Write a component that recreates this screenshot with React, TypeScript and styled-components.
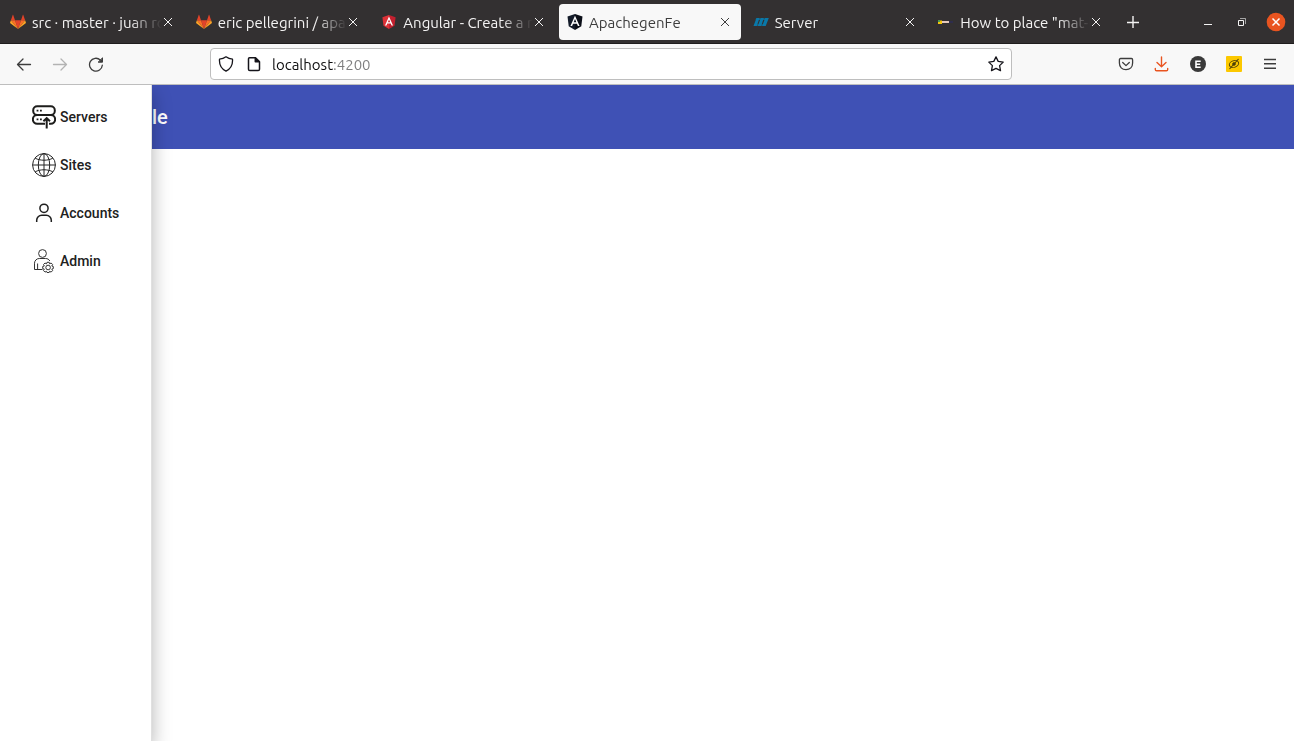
import React from "react";
import styled, { createGlobalStyle } from "styled-components";

const GlobalStyle = createGlobalStyle`
  *, *::before, *::after { box-sizing: border-box; }
  body { margin: 0; background: #fff; }
  button { border: 0; padding: 0; margin: 0; background: none; color: inherit; font: inherit; cursor: pointer; }
  svg { display: block; flex: none; }
`;

const Browser = styled.div`
  display: flex;
  flex-direction: column;
  min-height: 100vh;
  font-family: Ubuntu, "Noto Sans", sans-serif;
  font-size: 15px;
`;

const TitleBar = styled.header`
  display: flex;
  align-items: center;
  height: 44px;
  padding: 0 1px 0 2px;
  background: #333031;
  border-bottom: 1px solid #1f1d1d;
  color: #f4f3f3;
`;

const TabStrip = styled.div`
  display: flex;
  flex: 1;
  min-width: 0;
  gap: 4px;
`;

const TabItem = styled.div<{ $active?: boolean }>`
  display: flex;
  align-items: center;
  flex: 1 1 0;
  min-width: 0;
  height: 36px;
  padding: 0 10px 0 8px;
  border-radius: 4px;
  background: ${(p) => (p.$active ? "#f8f8f8" : "transparent")};
  color: ${(p) => (p.$active ? "#3d3d3d" : "#f4f3f3")};
`;

const TabButton = styled.button`
  display: flex;
  align-items: center;
  flex: 1;
  min-width: 0;
  gap: 6px;
  height: 100%;
  text-align: left;
`;

const TabTitle = styled.span`
  flex: 1;
  min-width: 0;
  overflow: hidden;
  white-space: nowrap;
  line-height: 20px;
  padding-top: 2px;
  mask-image: linear-gradient(to left, transparent, #000 32px);
`;

const TabClose = styled.button`
  display: flex;
  align-items: center;
  justify-content: center;
  width: 12px;
  height: 24px;
`;

const NewTab = styled.button`
  display: flex;
  align-items: center;
  justify-content: center;
  width: 42px;
  height: 36px;
`;

const WindowControls = styled.div`
  display: flex;
  margin-left: 37px;
`;

const WindowButton = styled.button`
  display: flex;
  align-items: center;
  justify-content: center;
  width: 34px;
  height: 36px;
`;

const NavBar = styled.div`
  display: flex;
  align-items: center;
  gap: 96px;
  height: 41px;
  padding: 0 6px;
  background: #f8f8f8;
  border-bottom: 1px solid #bebebe;
  color: #3d3d3d;
`;

const ToolGroup = styled.div`
  display: flex;
`;

const ToolButton = styled.button`
  display: flex;
  align-items: center;
  justify-content: center;
  width: 36px;
  height: 32px;

  &:disabled {
    color: #b3b3b3;
  }
`;

const AddressBar = styled.form`
  display: flex;
  align-items: center;
  flex: 1;
  min-width: 0;
  height: 32px;
  padding: 0 7px;
  background: #fff;
  border: 1px solid #bebebe;
  border-radius: 4px;
  color: #15141a;
`;

const AddressIcon = styled.button`
  display: flex;
  align-items: center;
  justify-content: center;
  width: 16px;
  height: 28px;

  & + & {
    margin-left: 12px;
  }
`;

const AddressInput = styled.input`
  flex: 1;
  min-width: 0;
  height: 28px;
  margin-left: 10px;
  padding: 1px 0 0;
  border: 0;
  outline: 0;
  font: inherit;
  color: transparent;
  caret-color: #15141a;
  background: linear-gradient(to right, #0c0c0d 61px, #7c7c7d 61px);
  background-clip: text;
  -webkit-background-clip: text;
`;

const Page = styled.div`
  display: flex;
  flex: 1;
  overflow: hidden;
  font-family: Roboto, "Liberation Sans", sans-serif;
`;

const Drawer = styled.nav`
  position: relative;
  z-index: 1;
  flex: none;
  width: 152px;
  padding-top: 8px;
  background: #fff;
  border-right: 1px solid #e0e0e0;
  box-shadow: 0 8px 18px rgba(0, 0, 0, 0.3);
`;

const DrawerLink = styled.a`
  display: flex;
  align-items: center;
  gap: 4px;
  height: 48px;
  padding-left: 32px;
  color: #212121;
  font-size: 14px;
  font-weight: 500;
  line-height: 20px;
  text-decoration: none;
`;

const Main = styled.main`
  flex: 1;
  min-width: 0;
`;

const AppToolbar = styled.div`
  display: flex;
  align-items: center;
  height: 64px;
  background: #3f51b5;
  color: #fff;
`;

const AppTitle = styled.h1`
  margin: 0;
  font-size: 20px;
  font-weight: 500;
  line-height: 32px;
`;

const Cross = () => (
  <svg width="10" height="10" viewBox="0 0 10 10" fill="none" stroke="currentColor" strokeWidth="1">
    <path d="M1 1l8 8M9 1L1 9" />
  </svg>
);

const GitlabLogo = () => (
  <svg width="16" height="16" viewBox="0 0 16 16">
    <path fill="#e24329" d="M8 15L5 6.2h6z" />
    <path fill="#fc6d26" d="M8 15L5 6.2H.9zM8 15l3-8.800h4.100z" />
    <path fill="#fca326" d="M.9 6.200L.1 8.600c-.1.3 0 .5.2.7L8 15zM15.100 6.200l.8 2.400c.1.3 0 .5-.2.7L8 15z" />
    <path fill="#e24329" d="M.9 6.200H5L3.200.9c-.1-.3-.4-.3-.5 0zM15.100 6.200H11L12.800.9c.1-.3.4-.3.5 0z" />
  </svg>
);

const AngularLogo = ({ left, right, size }: { left: string; right: string; size: number }) => (
  <svg width="16" height={size} viewBox="0 0 16 16">
    <path fill={left} d="M8 0L.5 2.600l1.200 9.700L8 16z" />
    <path fill={right} d="M8 0l7.500 2.600-1.200 9.700L8 16z" />
    <path fill="#fff" d="M8 1.800L3.400 12.100h1.700l.95-2.300h3.900l.95 2.300h1.700zM8 5l1.350 3.350h-2.700z" />
  </svg>
);

const ServerLogo = () => (
  <svg width="16" height="16" viewBox="0 0 16 16" fill="#0a78a8">
    <path d="M3.500 4h3L3.800 12H.5zM7.800 4h3L8.200 12H4.800zM12.200 4H15.800L12.700 12H9.200z" />
    <path d="M3 4.500h12l-.8 1.200H2.500zM1.500 10.500h11l-.5 1H1z" />
  </svg>
);

const ArticleLogo = () => (
  <svg width="16" height="16" viewBox="0 0 16 16">
    <path fill="#f6c60a" d="M0 6.500h4V10H0z" />
    <path fill="#4d9a51" d="M0 6h2v2H0z" />
    <path fill="#e6c9bc" d="M4 7h7v2H4z" />
    <path fill="#2b2a68" d="M11 7.500h4v1h-4z" />
  </svg>
);

const tabs = [
  { title: "src · master · juan ro", icon: <GitlabLogo /> },
  { title: "eric pellegrini / apac", icon: <GitlabLogo /> },
  { title: "Angular - Create a n", icon: <AngularLogo left="#dd3137" right="#c3202f" size={14} /> },
  { title: "ApachegenFe", icon: <AngularLogo left="#141c2a" right="#0b0f18" size={16} />, active: true },
  { title: "Server", icon: <ServerLogo /> },
  { title: 'How to place "mat-b', icon: <ArticleLogo /> },
];

const ServersIcon = () => (
  <svg width="24" height="24" viewBox="0 0 24 24" fill="none" stroke="#1d1d1b" strokeWidth="2">
    <rect x="1.200" y="1.200" width="21.600" height="8.800" rx="4" />
    <path d="M13 18.700H5.200a4.350 4.350 0 010-8.700h13.600a4.350 4.350 0 010 8.700H17" />
    <path d="M14.700 23.500V13.500M11.400 16.200l3.300-3 3.300 3" />
    <path d="M4.600 5.600h1.800M8 5.600h1.800M4.600 14.300h1.800M8 14.300h1.800" strokeWidth="1.700" />
  </svg>
);

const SitesIcon = () => (
  <svg width="24" height="24" viewBox="0 0 24 24" fill="none" stroke="#242424" strokeWidth="1">
    <circle cx="12" cy="12" r="11.400" />
    <ellipse cx="12" cy="12" rx="5.700" ry="11.400" />
    <path d="M12 .6v22.800M.6 12h22.800M3.200 5.200c5 2.700 12.600 2.700 17.600 0M3.200 18.800c5-2.700 12.600-2.700 17.600 0" />
  </svg>
);

const AccountsIcon = () => (
  <svg width="24" height="24" viewBox="0 0 24 24" fill="none" stroke="#1f1f1f" strokeWidth="1.500">
    <circle cx="12" cy="7.300" r="4.100" />
    <path d="M4.700 21v-1.800a5 5 0 015-5h4.600a5 5 0 015 5V21" />
  </svg>
);

const AdminIcon = () => (
  <svg width="24" height="24" viewBox="0 0 24 24" fill="none" stroke="#333" strokeWidth="1">
    <circle cx="10.500" cy="4.500" r="3.900" />
    <path d="M10.500 20.500h-8v-6.300a4.800 4.800 0 014.800-4.700h6.300c1.900 0 3.400.9 4.200 2.500M5.600 20.500v-6" />
    <path d="M15 13.300h2.200l.4 1.500 1.500-.8 1.500 1.500-.8 1.500 1.500.5v2.100l-1.500.5.8 1.500-1.500 1.500-1.500-.8-.4 1.200H15l-.5-1.200-1.500.8-1.500-1.500.8-1.500-1.600-.5v-2.100l1.600-.5-.8-1.500L13 14l1.500.8z" />
    <circle cx="16.100" cy="18.500" r="2.300" />
  </svg>
);

const links = [
  { label: "Servers", icon: <ServersIcon /> },
  { label: "Sites", icon: <SitesIcon /> },
  { label: "Accounts", icon: <AccountsIcon /> },
  { label: "Admin", icon: <AdminIcon /> },
];

const LineIcon = ({ children, width = 1.3 }: { children: React.ReactNode; width?: number }) => (
  <svg
    width="16"
    height="16"
    viewBox="0 0 16 16"
    fill="none"
    stroke="currentColor"
    strokeWidth={width}
    strokeLinecap="round"
    strokeLinejoin="round"
  >
    {children}
  </svg>
);

export default function App() {
  return (
    <Browser>
      <GlobalStyle />
      <TitleBar>
        <TabStrip>
          {tabs.map((tab) => (
            <TabItem key={tab.title} $active={tab.active}>
              <TabButton>
                {tab.icon}
                <TabTitle>{tab.title}</TabTitle>
              </TabButton>
              <TabClose aria-label="Close tab">
                <Cross />
              </TabClose>
            </TabItem>
          ))}
        </TabStrip>
        <NewTab aria-label="New tab">
          <svg width="12" height="12" viewBox="0 0 12 12" stroke="currentColor" strokeWidth="1.400">
            <path d="M6 0v12M0 6.500h12" />
          </svg>
        </NewTab>
        <WindowControls>
          <WindowButton aria-label="Minimize">
            <svg width="8" height="8" viewBox="0 0 8 8" stroke="currentColor">
              <path d="M0 6.500h8" />
            </svg>
          </WindowButton>
          <WindowButton aria-label="Restore">
            <svg width="8" height="8" viewBox="0 0 8 8" fill="none" stroke="currentColor">
              <path d="M.5 2.500h5v5h-5z" />
              <path d="M2 .5h5.500V6" strokeOpacity=".6" />
            </svg>
          </WindowButton>
          <WindowButton aria-label="Close window">
            <svg width="20" height="20" viewBox="0 0 20 20" fill="none">
              <circle cx="10" cy="10" r="9.300" fill="#e95420" />
              <path d="M6.500 6.500l7 7M13.500 6.500l-7 7" stroke="#fff" strokeWidth="1.500" />
            </svg>
          </WindowButton>
        </WindowControls>
      </TitleBar>

      <NavBar>
        <ToolGroup>
          <ToolButton aria-label="Back">
            <LineIcon>
              <path d="M14.500 8.500h-13M7 3L1.500 8.500 7 14" />
            </LineIcon>
          </ToolButton>
          <ToolButton aria-label="Forward" disabled>
            <LineIcon>
              <path d="M1.500 8.500h13M9 3l5.500 5.500L9 14" />
            </LineIcon>
          </ToolButton>
          <ToolButton aria-label="Reload">
            <LineIcon>
              <path d="M14.300 9.200A6.400 6.400 0 1112.300 4" />
              <path d="M14.500 2.200v4h-4z" fill="currentColor" strokeWidth="1" />
            </LineIcon>
          </ToolButton>
        </ToolGroup>

        <AddressBar onSubmit={(e) => e.preventDefault()}>
          <AddressIcon type="button" aria-label="Tracking protection">
            <LineIcon>
              <path d="M8 .8c2 1.500 4.200 2.200 6.500 2.400.4 5.200-1.500 9.500-6.500 12C3 12.700 1.100 8.400 1.500 3.200 3.800 3 6 2.300 8 .8z" />
            </LineIcon>
          </AddressIcon>
          <AddressIcon type="button" aria-label="Site information">
            <LineIcon width={1.5}>
              <path d="M3.500 1.800h6l4 4v7.400c0 .8-.5 1.300-1.300 1.300H3.800c-.8 0-1.300-.5-1.300-1.300V2.800c0-.6.400-1 1-1z" />
              <path d="M9.300 2v3.800h4z" fill="currentColor" />
            </LineIcon>
          </AddressIcon>
          <AddressInput aria-label="Address" defaultValue="localhost:4200" spellCheck={false} />
          <AddressIcon type="button" aria-label="Bookmark this page">
            <LineIcon>
              <path d="M8 .9l2.200 4.500 5 .7-3.600 3.500.9 5L8 12.300l-4.500 2.300.9-5L.8 6.100l5-.7z" />
            </LineIcon>
          </AddressIcon>
        </AddressBar>

        <ToolGroup>
          <ToolButton aria-label="Save to Pocket">
            <LineIcon>
              <path d="M2.600 2.500h10.800c.7 0 1.200.5 1.200 1.200v3.400c0 4-2.600 6.600-6.600 6.600S1.400 11.100 1.400 7.100V3.700c0-.7.500-1.200 1.200-1.200z" />
              <path d="M4.700 6.500L8 9.600l3.300-3.100" />
            </LineIcon>
          </ToolButton>
          <ToolButton aria-label="Downloads">
            <svg width="16" height="16" viewBox="0 0 16 16" fill="none" stroke="#e95420" strokeWidth="1.400" strokeLinecap="round" strokeLinejoin="round">
              <path d="M7.500 1v9.500M3 6.500l4.500 4.300L12 6.500M1.300 12.500v1c0 .8.5 1.300 1.300 1.300h9.800c.8 0 1.300-.5 1.300-1.300v-1" />
            </svg>
          </ToolButton>
          <ToolButton aria-label="Account">
            <svg width="16" height="16" viewBox="0 0 16 16">
              <circle cx="8" cy="8" r="8" fill="#3a3a3a" />
              <path d="M10.700 5.200H6v6h4.700M6 8.200h4.200" fill="none" stroke="#fff" strokeWidth="1.600" />
            </svg>
          </ToolButton>
          <ToolButton aria-label="Extension">
            <svg width="16" height="16" viewBox="0 0 16 16" fill="none" stroke="#4c4008">
              <rect width="16" height="16" rx="1" fill="#fcc800" stroke="none" />
              <ellipse cx="8" cy="8" rx="4.800" ry="3.300" transform="rotate(-20 8 8)" />
              <circle cx="8" cy="8" r="1.300" fill="#4c4008" />
              <path d="M3.500 13l9-10" strokeWidth="1.100" />
            </svg>
          </ToolButton>
          <ToolButton aria-label="Open menu">
            <svg width="12" height="12" viewBox="0 0 12 12" stroke="currentColor" strokeWidth="1.400">
              <path d="M0 1.500h12M0 5.700h12M0 10.300h12" />
            </svg>
          </ToolButton>
        </ToolGroup>
      </NavBar>

      <Page>
        <Drawer aria-label="Main">
          {links.map((link) => (
            <DrawerLink key={link.label} href="#">
              {link.icon}
              {link.label}
            </DrawerLink>
          ))}
        </Drawer>
        <Main>
          <AppToolbar>
            <AppTitle>le</AppTitle>
          </AppToolbar>
        </Main>
      </Page>
    </Browser>
  );
}
